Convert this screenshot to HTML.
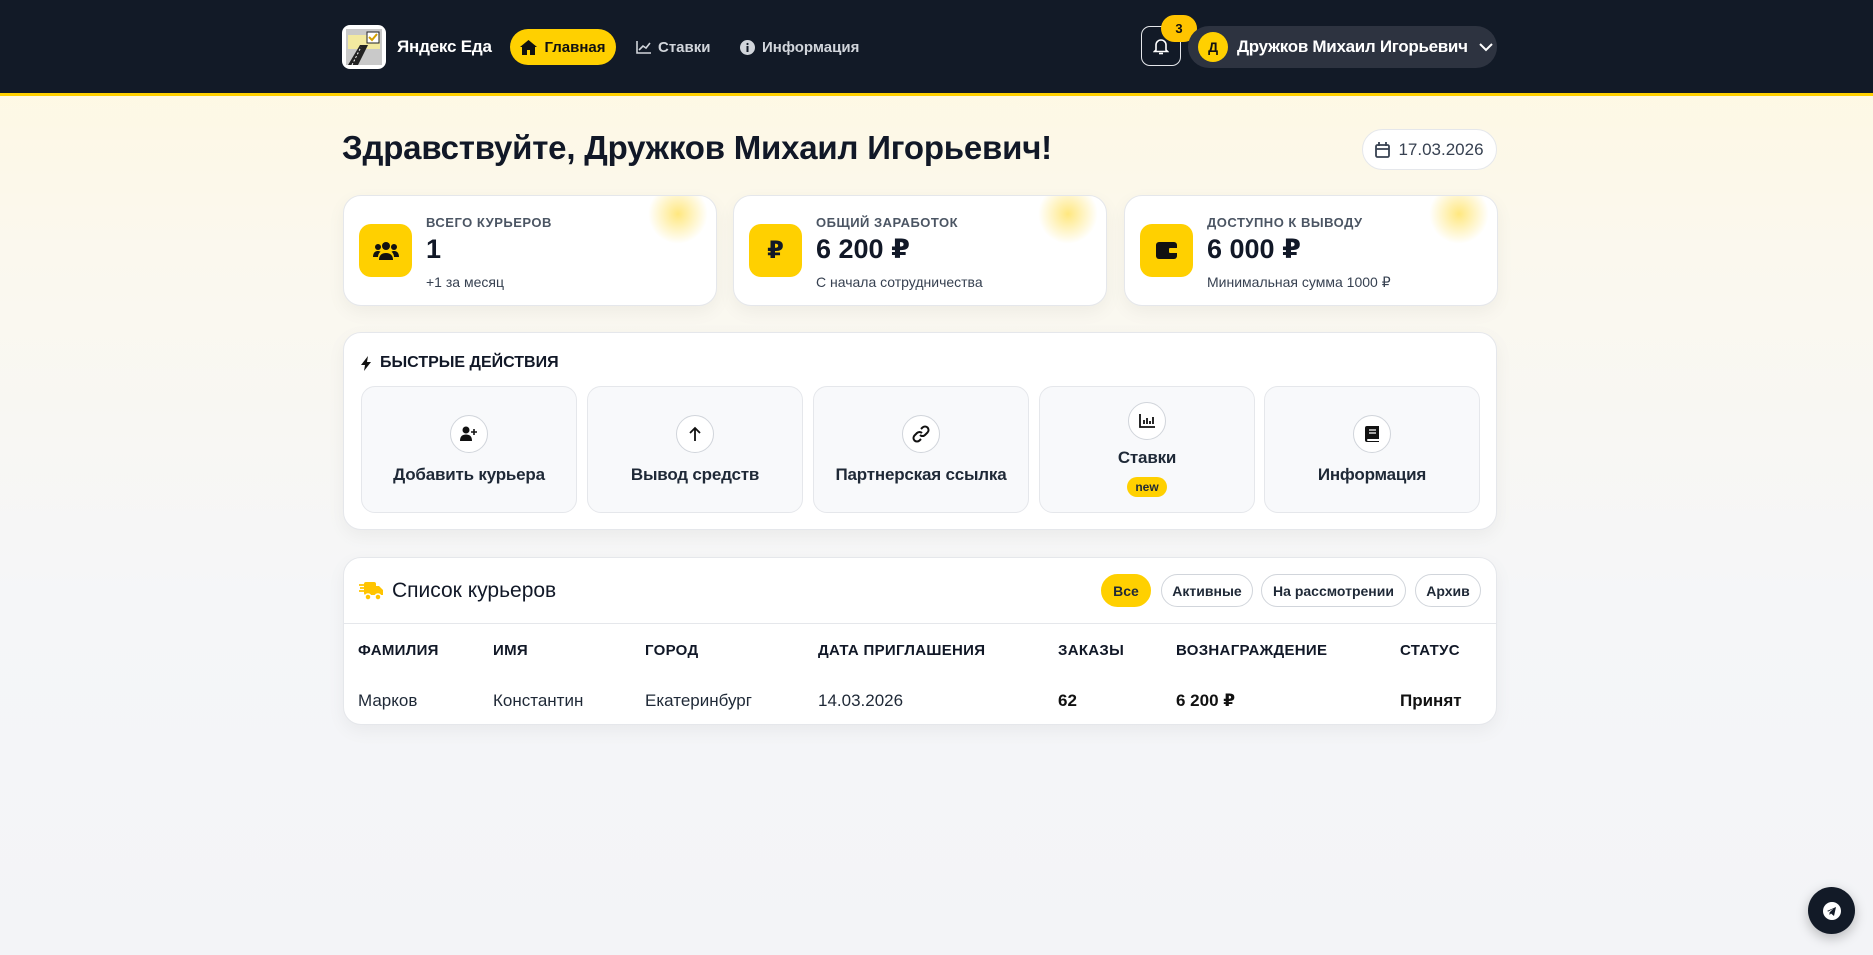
<!DOCTYPE html>
<html><head><meta charset="utf-8"><style>
*{box-sizing:border-box;margin:0;padding:0}
body{width:1873px;height:955px;overflow:hidden;font-family:"Liberation Sans","DejaVu Sans",sans-serif;color:#111827;background:linear-gradient(180deg,#fff9df 0px,#fbf8ee 250px,#f5f6f8 600px,#f3f4f7 955px);position:relative}
.hdr{position:absolute;left:0;top:0;width:1873px;height:96px;background:#121a27;border-bottom:3px solid #ffd000}
.abs{position:absolute}
.logo{left:342px;top:25px;width:44px;height:44px;background:#fff;border-radius:8px;padding:4px}
.brand{left:397px;top:37px;color:#fff;font-weight:bold;font-size:17px;letter-spacing:-.2px}
.nav{top:29px;height:36px;display:flex;align-items:center;gap:7px;font-size:15px;font-weight:bold;color:#d1d5db;white-space:nowrap}
.pill{left:510px;width:106px;background:#ffd000;color:#111;border-radius:18px;justify-content:center}
.bell{left:1141px;top:26px;width:40px;height:40px;border:1.5px solid #e5e7eb;border-radius:9px;display:flex;align-items:center;justify-content:center}
.badge{left:1161px;top:15px;width:36px;height:27px;background:#ffc400;border-radius:14px;font-size:13px;font-weight:bold;display:flex;align-items:center;justify-content:center;color:#111}
.user{left:1188px;top:26px;width:309px;height:42px;background:#2d3340;border-radius:21px;display:flex;align-items:center;padding-left:10px;gap:9px;color:#fff;font-weight:bold;font-size:17px;letter-spacing:-.3px;white-space:nowrap}
.av{width:30px;height:30px;border-radius:50%;background:#ffd000;color:#111;font-size:14px;display:flex;align-items:center;justify-content:center;flex:none}
h1{position:absolute;left:342px;top:129px;font-size:33px;font-weight:bold;color:#111827;letter-spacing:-.2px;white-space:nowrap}
.date{left:1362px;top:129px;width:135px;height:41px;background:#fff;border:1px solid #e5e7eb;border-radius:21px;display:flex;align-items:center;justify-content:center;gap:8px;font-size:17px;color:#374151}
.card{background:#fff;border:1px solid #e5e7eb;border-radius:18px;box-shadow:0 6px 18px rgba(0,0,0,.05)}
.stat{top:195px;width:374px;height:111px;overflow:hidden}
.glow{position:absolute;right:8px;top:-12px;width:60px;height:60px;border-radius:50%;background:radial-gradient(circle,rgba(255,208,0,.5),rgba(255,208,0,0) 70%)}
.ib{position:absolute;left:15px;top:28px;width:53px;height:53px;background:#ffd000;border-radius:12px;display:flex;align-items:center;justify-content:center}
.sl{position:absolute;left:82px;top:19px;font-size:13px;font-weight:bold;color:#4b5563;letter-spacing:.5px}
.sv{position:absolute;left:82px;top:38px;font-size:27px;font-weight:bold}
.ss{position:absolute;left:82px;top:78px;font-size:14px;color:#374151}
.qa{left:343px;top:332px;width:1154px;height:198px}
.qt{position:absolute;left:17px;top:21px;font-size:16px;font-weight:bold;display:flex;gap:8px;align-items:center}
.tile{position:absolute;top:53px;width:216px;height:127px;background:#f8f9fb;border:1px solid #e5e7eb;border-radius:14px;display:flex;flex-direction:column;align-items:center;justify-content:center;font-size:17px;font-weight:bold;color:#1f2937;letter-spacing:-.2px}
.ci{width:38px;height:38px;border-radius:50%;background:#fff;border:1px solid #d1d5db;display:flex;align-items:center;justify-content:center;margin-bottom:12px}
.new{background:#ffd000;border-radius:10px;font-size:12px;padding:3px 8px;margin-top:9px;letter-spacing:0}
.cl{left:343px;top:557px;width:1154px;height:168px;overflow:hidden}
.clh{height:66px;border-bottom:1px solid #e5e7eb;display:flex;align-items:center;padding-left:15px;font-size:21px;gap:9px}
.f{position:absolute;top:16px;height:33px;border:1px solid #d1d5db;border-radius:17px;font-size:14px;font-weight:bold;color:#1f2937;display:flex;align-items:center;justify-content:center;background:#fff;white-space:nowrap}
.th,.td{position:absolute;font-size:15px}
.th{top:84px;font-weight:bold;letter-spacing:.3px}
.td{top:133px;font-size:17px;color:#1f2937}
.tg{left:1808px;top:887px;width:47px;height:47px;border-radius:50%;background:#121a27;display:flex;align-items:center;justify-content:center;box-shadow:0 4px 12px rgba(0,0,0,.25)}
</style></head><body>
<div class="hdr"></div>
<div class="abs logo"><svg width="36" height="36" viewBox="0 0 36 36"><rect width="36" height="36" fill="#c9c9c9"/><rect x="2" y="6" width="32" height="14" fill="#f2e9a0"/><path d="M2 36 L14 16 L22 16 L12 36Z" fill="#222"/><path d="M6 36 L15 18" stroke="#fff" stroke-width="1" stroke-dasharray="2 2"/><rect x="21" y="3" width="12" height="11" fill="#fff" stroke="#222"/><path d="M23 8l3 3 5-6" stroke="#d4a000" stroke-width="2" fill="none"/></svg></div>
<div class="abs brand">Яндекс Еда</div>
<div class="abs nav pill"><svg width="17" height="15" viewBox="0 0 17 15"><path d="M8.5 0L0 7h2v8h5v-5h3v5h5V7h2z" fill="#111"/></svg>Главная</div>
<div class="abs nav" style="left:636px"><svg width="15" height="13" viewBox="0 0 15 13" fill="none" stroke="#d1d5db" stroke-width="1.6"><path d="M1 0v12h14M3 9l4-4 3 2 4-5"/></svg>Ставки</div>
<div class="abs nav" style="left:740px"><svg width="15" height="15"><circle cx="7.5" cy="7.5" r="7.5" fill="#d1d5db"/><rect x="6.5" y="6" width="2" height="6" fill="#121a27"/><circle cx="7.5" cy="4" r="1.1" fill="#121a27"/></svg>Информация</div>
<div class="abs bell"><svg width="16" height="17" viewBox="0 0 16 17" fill="none" stroke="#fff" stroke-width="1.6"><path d="M3 12V7a5 5 0 0110 0v5l1.5 1.5h-13z"/><path d="M6 15.5h4"/></svg></div>
<div class="abs badge">3</div>
<div class="abs user"><div class="av">Д</div>Дружков Михаил Игорьевич<svg width="14" height="9" style="margin-left:2px;flex:none" fill="none" stroke="#fff" stroke-width="2"><path d="M1 1l6 6 6-6"/></svg></div>
<h1>Здравствуйте, Дружков Михаил Игорьевич!</h1>
<div class="abs date"><svg width="15" height="16" viewBox="0 0 15 16" fill="none" stroke="#374151" stroke-width="1.8"><rect x="1" y="3" width="13" height="12" rx="1.5"/><path d="M4 0v4M11 0v4M1 7h13"/></svg>17.03.2026</div>

<div class="abs card stat" style="left:343px"><div class="glow"></div><div class="ib"><svg width="26" height="20" viewBox="0 0 26 20" fill="#111"><circle cx="13" cy="5" r="4"/><circle cx="5" cy="6" r="3"/><circle cx="21" cy="6" r="3"/><path d="M6 19c0-5 3-7 7-7s7 2 7 7z"/><path d="M0 16c0-4 2-6 5-6 1 0 2 .3 2.5.8C6 12 5 14 5 16z"/><path d="M26 16c0-4-2-6-5-6-1 0-2 .3-2.5.8 1.5 1.2 2.5 3.2 2.5 5.2z"/></svg></div><div class="sl">ВСЕГО КУРЬЕРОВ</div><div class="sv">1</div><div class="ss">+1 за месяц</div></div>
<div class="abs card stat" style="left:733px"><div class="glow"></div><div class="ib" style="font-size:24px;font-weight:bold">₽</div><div class="sl">ОБЩИЙ ЗАРАБОТОК</div><div class="sv">6 200 ₽</div><div class="ss">С начала сотрудничества</div></div>
<div class="abs card stat" style="left:1124px"><div class="glow"></div><div class="ib"><svg width="22" height="19" viewBox="0 0 22 19"><rect x="0" y="1" width="21" height="17" rx="3" fill="#111"/><rect x="13" y="7" width="9" height="5" rx="1" fill="#ffd000"/></svg></div><div class="sl">ДОСТУПНО К ВЫВОДУ</div><div class="sv">6 000 ₽</div><div class="ss">Минимальная сумма 1000 ₽</div></div>

<div class="abs card qa">
<div class="qt"><svg width="11" height="15" viewBox="0 0 11 15"><path d="M7 0L0 9h4l-1 6 7-9H6z" fill="#111"/></svg>БЫСТРЫЕ ДЕЙСТВИЯ</div>
<div class="tile" style="left:17px;top:53px"><div class="ci"><svg width="18" height="15" viewBox="0 0 18 15" fill="#111"><circle cx="6" cy="4" r="3.5"/><path d="M0 15c0-5 2.5-6.5 6-6.5s6 1.5 6 6.5z"/><path d="M14 3v6M11 6h6" stroke="#111" stroke-width="1.6"/></svg></div>Добавить курьера</div>
<div class="tile" style="left:243px"><div class="ci"><svg width="14" height="16" fill="none" stroke="#111" stroke-width="1.8"><path d="M7 15V2M2 7l5-5 5 5"/></svg></div>Вывод средств</div>
<div class="tile" style="left:469px"><div class="ci"><svg width="18" height="18" viewBox="0 0 18 18" fill="none" stroke="#111" stroke-width="2"><path d="M8 10a3.5 3.5 0 005 0l2.5-2.5a3.5 3.5 0 00-5-5L9 4"/><path d="M10 8a3.5 3.5 0 00-5 0L2.5 10.5a3.5 3.5 0 005 5L9 14"/></svg></div>Партнерская ссылка</div>
<div class="tile" style="left:695px"><div class="ci" style="margin-bottom:8px"><svg width="16" height="14" fill="none" stroke="#111" stroke-width="1.8"><path d="M1 0v13h15M5 10V6M8 10V4M11 10V7M14 10V3"/></svg></div>Ставки<div class="new">new</div></div>
<div class="tile" style="left:920px"><div class="ci"><svg width="14" height="16" viewBox="0 0 14 16"><path d="M2 0h12v13H3a1 1 0 000 2h11v1H2a2 2 0 01-2-2V2a2 2 0 012-2z" fill="#111"/><path d="M4 4h7M4 7h7" stroke="#fff" stroke-width="1.3"/></svg></div>Информация</div>
</div>

<div class="abs card cl">
<div class="clh"><svg width="24" height="20" viewBox="0 0 24 20"><rect x="5" y="1" width="12" height="13" rx="2" fill="#ffc400"/><path d="M17 5h3l4 4v5h-7z" fill="#ffc400"/><circle cx="9" cy="16" r="3" fill="#ffc400" stroke="#fff" stroke-width="1.5"/><circle cx="19" cy="16" r="3" fill="#ffc400" stroke="#fff" stroke-width="1.5"/><path d="M0 4h6M1 7h5M0 10h6" stroke="#ffc400" stroke-width="1.8"/></svg>Список курьеров</div>
<div class="f" style="left:757px;width:50px;background:#ffd000;border-color:#ffd000">Все</div>
<div class="f" style="left:817px;width:92px">Активные</div>
<div class="f" style="left:917px;width:145px">На рассмотрении</div>
<div class="f" style="left:1071px;width:66px">Архив</div>
<div class="th" style="left:14px">ФАМИЛИЯ</div><div class="th" style="left:149px">ИМЯ</div><div class="th" style="left:301px">ГОРОД</div><div class="th" style="left:474px">ДАТА ПРИГЛАШЕНИЯ</div><div class="th" style="left:714px">ЗАКАЗЫ</div><div class="th" style="left:832px">ВОЗНАГРАЖДЕНИЕ</div><div class="th" style="left:1056px">СТАТУС</div>
<div class="td" style="left:14px">Марков</div><div class="td" style="left:149px">Константин</div><div class="td" style="left:301px">Екатеринбург</div><div class="td" style="left:474px">14.03.2026</div><div class="td" style="left:714px;font-weight:bold;color:#111">62</div><div class="td" style="left:832px;font-weight:bold;color:#111">6 200 ₽</div><div class="td" style="left:1056px;font-weight:bold;color:#111">Принят</div>
</div>
<div class="abs tg"><svg width="18" height="18" viewBox="0 0 18 18"><circle cx="9" cy="9" r="9" fill="#fff"/><path d="M4 9l9-4-2 9-3-2.5-1.5 1.5v-2.5l4-4-5 3z" fill="#121a27"/></svg></div>
</body></html>
